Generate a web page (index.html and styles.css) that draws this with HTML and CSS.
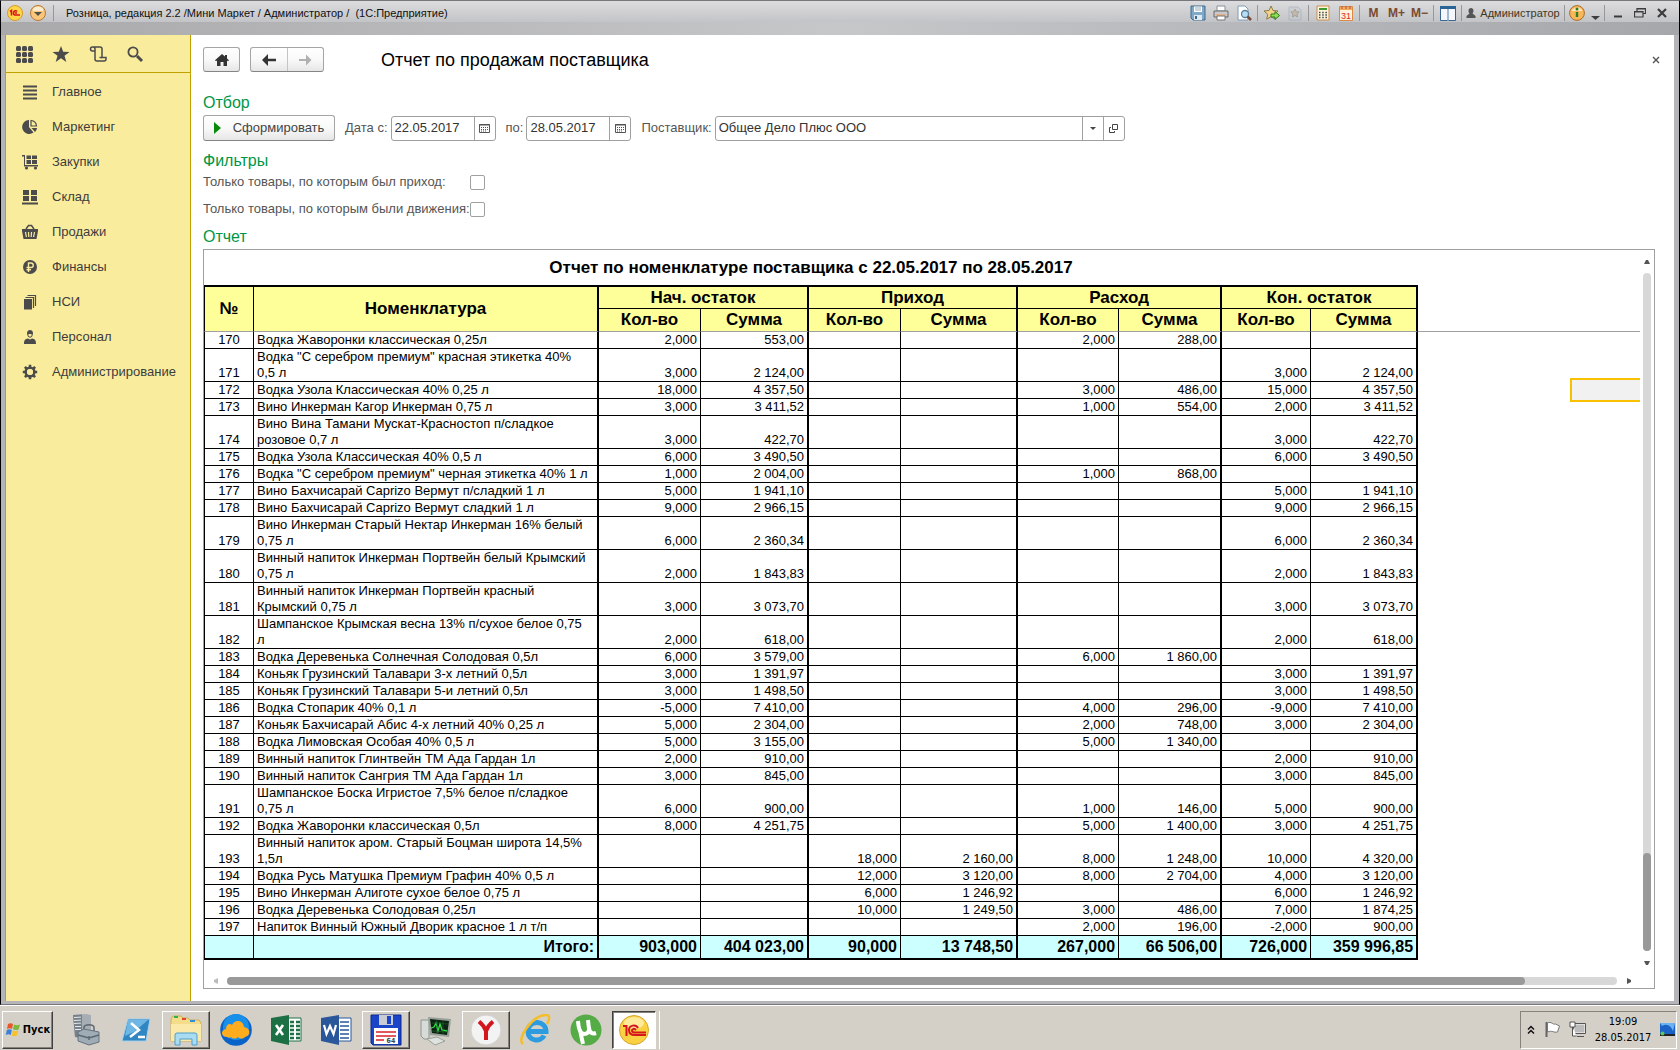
FILE: index.html
```html
<!DOCTYPE html>
<html lang="ru">
<head>
<meta charset="utf-8">
<title>Розница, редакция 2.2</title>
<link rel="stylesheet" href="styles.css">
</head>
<body>
<div class="window">
  <header class="titlebar">
    <button class="logo" aria-label="1С"><svg width="16" height="16" viewBox="0 0 16 16"><circle cx="8" cy="8" r="7.500" fill="#ffd84a" stroke="#d99a2b"/><path d="M3 6.500 4.500 5.500V10.500M10 6.500C9.500 5.500 6.500 5.300 6.500 8S9 10 10 10H13M10 8H8" fill="none" stroke="#d8141c" stroke-width="1.600"/></svg></button>
    <button class="logo" aria-label="Меню"><svg width="16" height="16" viewBox="0 0 16 16"><circle cx="8" cy="8" r="7.500" fill="#fbc67a" stroke="#b5783a"/><path d="M3 3.500a7 7 0 0 1 10 0V6H3z" fill="#fdebd0"/><path d="M4 7h8l-4 4z" fill="#54504a"/></svg></button>
    <span class="sep"></span>
    <h1 class="app-title">Розница, редакция 2.2 /Мини Маркет / Администратор /&nbsp; (1С:Предприятие)</h1>
    <div class="tools">
      <button aria-label="Сохранить"><svg width="16" height="16" viewBox="0 0 16 16"><path d="M1 1h14v14H3l-2-2z" fill="#7fa9c9" stroke="#41698a"/><path d="M4 1.500h8V7H4z" fill="#fff"/><path d="M5 3h6M5 5h6" stroke="#9ab"/><path d="M4 10h8v5H4z" fill="#dfe9f1"/><path d="M5 11h2v3H5z" fill="#41698a"/></svg></button>
      <button aria-label="Печать"><svg width="16" height="16" viewBox="0 0 16 16"><path d="M4 1h8v5H4z" fill="#fff" stroke="#8a8f96"/><path d="M1 6h14v6H1z" fill="#c9c9cc" stroke="#68686c"/><path d="M3 9h10v2H3z" fill="#e2b38a"/><path d="M4 11h8v4H4z" fill="#fff" stroke="#777"/></svg></button>
      <button aria-label="Просмотр"><svg width="16" height="16" viewBox="0 0 16 16"><path d="M2 1h7l3 3v11H2z" fill="#fff" stroke="#7f9cb8"/><circle cx="9" cy="9" r="3.500" fill="#b8def5" stroke="#5b7f9c" stroke-width="1.300"/><path d="m11.500 11.500 3.500 3.500" stroke="#7a4a36" stroke-width="2.500"/></svg></button>
      <span class="sep"></span>
      <button aria-label="В избранное"><svg width="17" height="16" viewBox="0 0 17 16"><path d="m8 1 2 4.500 5 .5-3.700 3.300 1 4.900L8 11.700l-4.300 2.500 1-4.900L1 6l5-.5z" fill="#f3d28a" stroke="#8a7b45"/><path d="M8 9h4V6.500l4.500 4-4.500 4V12H8z" fill="#8fe052" stroke="#2c7a1d"/></svg></button>
      <button aria-label="Избранное"><svg width="14" height="16" viewBox="0 0 14 16" opacity=".5"><path d="M1 2h9l3 3v10H1z" fill="#c4ccd4" stroke="#98a5b2"/><path d="m7 4 1.200 2.700 3 .3-2.200 2 .6 3L7 10.500 4.400 12 5 9 2.800 7l3-.3z" fill="#baa88c" stroke="#85765c"/></svg></button>
      <span class="sep"></span>
      <button aria-label="Калькулятор"><svg width="14" height="16" viewBox="0 0 14 16"><path d="M1 1h12v14H1z" fill="#fdf4dc" stroke="#c98f4f"/><path d="M3 3h8v2H3z" fill="#3f9b2d"/><path d="M3 7.500h8M3 10h8M3 12.500h8" stroke="#444" stroke-width="1.400" stroke-dasharray="1.500 1.700"/></svg></button>
      <button aria-label="Календарь"><svg width="14" height="16" viewBox="0 0 14 16"><path d="M.5 1.500h13v14H.5z" fill="#fff3df" stroke="#d98a45"/><path d="M1 2h12v3H1z" fill="#f4ab55"/><path d="M3 1v3M7 1v3M11 1v3" stroke="#a55" /><text x="7" y="13.500" font-size="9" text-anchor="middle" fill="#e02a20">31</text></svg></button>
      <span class="sep"></span>
      <button class="mem">M</button>
      <button class="mem">M+</button>
      <button class="mem">M−</button>
      <span class="sep"></span>
      <button aria-label="Панели"><svg width="16" height="15" viewBox="0 0 16 15"><path d="M.5.500h15v14H.5z" fill="#f4f8fc" stroke="#37658f"/><path d="M0 0h16v3H0z" fill="#2a6496"/><path d="M8 3v12" stroke="#8aa6bf" stroke-width="1.500"/></svg></button>
      <span class="sep"></span>
      <button class="user"><svg width="10" height="10" viewBox="0 0 10 10"><path d="M5 0c3 0 3 4 1.500 5.500L9.500 8v2H.500V8l3-2.500C2 4 2 0 5 0z" fill="#555"/></svg>Администратор</button>
      <span class="sep"></span>
      <button class="info" aria-label="Справка"><svg width="32" height="16" viewBox="0 0 32 16"><circle cx="8" cy="8" r="7.400" fill="#f8b85a" stroke="#a86f2a"/><path d="M2.500 6a6 6 0 0 1 11 0z" fill="#fde6bf"/><path d="M8 7v5" stroke="#2f7d1e" stroke-width="2.400"/><circle cx="8" cy="4" r="1.500" fill="#2f7d1e"/><path d="M22 11h9l-4.500 4z" fill="#3f3f3f"/></svg></button>
      <span class="sep"></span>
      <button class="ctl" aria-label="Свернуть"><svg width="12" height="12" viewBox="0 0 12 12"><path d="M2 9.500h8" stroke="#3c3c3c" stroke-width="2"/></svg></button>
      <button class="ctl" aria-label="Восстановить"><svg width="12" height="12" viewBox="0 0 12 12"><path d="M3 4V1.500h8.500v5H9M.500 4.500H9V10H.500z" fill="none" stroke="#3c3c3c" stroke-width="1.200"/><path d="M3 2h8M1 5h8" stroke="#3c3c3c"/></svg></button>
      <button class="ctl" aria-label="Закрыть"><svg width="12" height="12" viewBox="0 0 12 12"><path d="m2 2 8 8m0-8-8 8" stroke="#3c3c3c" stroke-width="2.200"/></svg></button>
    </div>
  </header>

  <div class="body">
    <nav class="sidebar">
      <div class="side-tools">
        <button aria-label="Разделы"><svg width="18" height="18" viewBox="0 0 18 18" fill="#4b4b4b"><g id="dots"><rect x="1" y="1" width="5" height="5" rx="1.500"/><rect x="7" y="1" width="5" height="5" rx="1.500"/><rect x="13" y="1" width="5" height="5" rx="1.500"/></g><use href="#dots" y="6"/><use href="#dots" y="12"/></svg></button>
        <button aria-label="Избранное"><svg width="18" height="18" viewBox="0 0 18 18"><path d="m9 1 2.200 5.700 6.300.2-5 3.800 1.800 6.200L9 13.300 3.700 16.900l1.800-6.200-5-3.800 6.300-.2z" fill="#4b4b4b"/></svg></button>
        <button aria-label="История"><svg width="18" height="18" viewBox="0 0 18 18" fill="none" stroke="#4b4b4b" stroke-width="1.500"><path d="M6 6H3.500a2 2 0 0 1 0-4h7.500q2 0 2 2v8.500h4v1.500q0 2-2 2H8q-2 0-2-2V4q0-2-2-2"/><path d="M13 12.500h-2.500"/></svg></button>
        <button aria-label="Поиск"><svg width="18" height="18" viewBox="0 0 18 18" fill="none" stroke="#4b4b4b"><circle cx="7" cy="7" r="4.600" stroke-width="1.800"/><path d="m11 11 5 5" stroke-width="3"/></svg></button>
      </div>
      <ul class="menu">
        <li><a href="#"><svg width="16" height="16" viewBox="0 0 16 16"><path d="M1 2.500h14M1 6.500h14M1 10.500h14M1 14.500h14" stroke="#4b4b4b" stroke-width="2"/></svg>Главное</a></li>
        <li><a href="#"><svg width="16" height="16" viewBox="0 0 16 16"><path d="M7 1v7l4.500 5.500A7 7 0 1 1 7 1z" fill="#4b4b4b"/><path d="M9 1.500A6 6 0 0 1 14.500 7H9z" fill="none" stroke="#4b4b4b" stroke-width="1.200"/><path d="M9.500 9H15a6 6 0 0 1-2 4z" fill="#4b4b4b"/></svg>Маркетинг</a></li>
        <li><a href="#"><svg width="16" height="16" viewBox="0 0 16 16" fill="#4b4b4b"><path d="M0 1h3v10h13v1.500H2V2.500H0zM4.500 1.500H9V5H4.500zM10 1.500h5V5h-5zM4.500 6H9v4H4.500zM10 6h5v4h-5z"/><circle cx="4.500" cy="14" r="1.600"/><circle cx="13.500" cy="14" r="1.600"/></svg>Закупки</a></li>
        <li><a href="#"><svg width="16" height="16" viewBox="0 0 16 16" fill="#4b4b4b"><path d="M1 1h6v5H1zM9 1h6v5H9zM1 7h6v5H1zM9 7h6v5H9zM0 13.500h16v2H0z"/></svg>Склад</a></li>
        <li><a href="#"><svg width="16" height="16" viewBox="0 0 16 16"><path d="M0 5h16v2l-1.500 8h-13L0 7z" fill="#4b4b4b"/><path d="m3.500 8 .9 5M6.500 8l.3 5M9.500 8l-.3 5M12.500 8l-.9 5" stroke="#faec9d" stroke-width="1.200"/><path d="M4 5 6.500 1.500h3L12 5" fill="none" stroke="#4b4b4b" stroke-width="1.500"/></svg>Продажи</a></li>
        <li><a href="#"><svg width="16" height="16" viewBox="0 0 16 16"><circle cx="8" cy="8" r="7" fill="#4b4b4b"/><path d="M6.500 13V4H9c3 0 3 4.500 0 4.500H4.500M4.500 10.700H9" fill="none" stroke="#faec9d" stroke-width="1.400"/></svg>Финансы</a></li>
        <li><a href="#"><svg width="16" height="16" viewBox="0 0 16 16"><path d="M2 5h8v10.500H2z" fill="#4b4b4b"/><path d="M3.500 3.500h8V14M5.500 1.500h8V12" fill="none" stroke="#4b4b4b" stroke-width="1.200"/></svg>НСИ</a></li>
        <li><a href="#"><svg width="16" height="16" viewBox="0 0 16 16" fill="#4b4b4b"><path d="M8 1c3.500 0 3.500 4 2 6.500C9 9 7 9 6 7.500 4.500 5 4.500 1 8 1z"/><path d="M2 15c0-4 1-5 4-5.500l2 1 2-1c3 .5 4 1.500 4 5.500z"/><path d="M6.500 5h3v1.500L8 8 6.500 6.500z" fill="#faec9d"/></svg>Персонал</a></li>
        <li><a href="#"><svg width="16" height="16" viewBox="0 0 16 16"><circle cx="8" cy="8" r="4.300" fill="none" stroke="#4b4b4b" stroke-width="2.600"/><path d="M8 .8v3M8 12.200v3M.8 8h3M12.200 8h3M2.900 2.900 5 5M11 11l2.100 2.100M2.900 13.100 5 11M11 5l2.100-2.100" stroke="#4b4b4b" stroke-width="2.600"/><circle cx="8" cy="8" r="3" fill="#faec9d"/></svg>Администрирование</a></li>
      </ul>
    </nav>

    <main class="content">
      <div class="page-head">
        <button class="btn home" aria-label="Начальная страница"><svg width="14" height="12" viewBox="0 0 14 12"><path d="M7 0 0 6.200 1 7.300l1-.8V12h3.500V8h3v4H12V6.500l1 .8 1-1.100-2-1.800V1h-2v1.600z" fill="#333"/></svg></button>
        <div class="history">
          <button aria-label="Назад"><svg width="14" height="12" viewBox="0 0 14 12"><path d="M0 6 6 0v4.700h8v2.600H6V12z" fill="#333"/></svg></button>
          <button aria-label="Вперед" disabled><svg width="14" height="12" viewBox="0 0 14 12"><path d="M13.500 6 8 .5V5H1v2h7v4.500z" fill="#b0b0b0"/></svg></button>
        </div>
        <h2 class="page-title">Отчет по продажам поставщика</h2>
        <button class="close" aria-label="Закрыть"><svg width="8" height="8" viewBox="0 0 8 8"><path d="m1 1 6 6m0-6L1 7" stroke="#555" stroke-width="1.400"/></svg></button>
      </div>

      <h3 class="group">Отбор</h3>
      <div class="form-row">
        <button class="btn run"><svg width="7" height="12" viewBox="0 0 7 12"><path d="M0 0v12l7-6z" fill="#0a8a0a"/></svg>Сформировать</button>
        <label for="from">Дата с:</label>
        <div class="field date"><input id="from" type="text" value="22.05.2017"><button aria-label="Календарь"><svg width="11" height="9" viewBox="0 0 11 9"><path d="M.5.500h10v8H.5z" fill="none" stroke="#555"/><path d="M0 1h11" stroke="#555"/><path d="M2 3.500h7M2 5.500h7M2 7h5" stroke="#555" stroke-dasharray="1 1"/></svg></button></div>
        <label for="to">по:</label>
        <div class="field date"><input id="to" type="text" value="28.05.2017"><button aria-label="Календарь"><svg width="11" height="9" viewBox="0 0 11 9"><path d="M.5.500h10v8H.5z" fill="none" stroke="#555"/><path d="M0 1h11" stroke="#555"/><path d="M2 3.500h7M2 5.500h7M2 7h5" stroke="#555" stroke-dasharray="1 1"/></svg></button></div>
        <label for="vendor">Поставщик:</label>
        <div class="field vendor"><input id="vendor" type="text" value="Общее Дело Плюс ООО"><button aria-label="Выбрать"><svg width="6" height="3" viewBox="0 0 6 3"><path d="M0 0h6L3 3z" fill="#444"/></svg></button><button aria-label="Открыть"><svg width="9" height="9" viewBox="0 0 9 9"><path d="M3.500.500h5v5h-5zM2 3.500H.500v5h5V7" fill="none" stroke="#444"/></svg></button></div>
      </div>

      <h3 class="group filters">Фильтры</h3>
      <div class="check"><label for="income">Только товары, по которым был приход:</label><input id="income" type="checkbox"></div>
      <div class="check"><label for="moves">Только товары, по которым были движения:</label><input id="moves" type="checkbox"></div>

      <h3 class="group report-label">Отчет</h3>
      <section class="report">
        <div class="sheet">
          <table>
            <caption>Отчет по номенклатуре поставщика с 22.05.2017 по 28.05.2017</caption>
            <colgroup><col class="c-num"><col class="c-name"><col class="c-q1"><col class="c-s1"><col class="c-q2"><col class="c-s2"><col class="c-q3"><col class="c-s3"><col class="c-q4"><col class="c-s4"></colgroup>
            <thead>
              <tr><th rowspan="2" class="low first">№</th><th rowspan="2" class="low thick">Номенклатура</th><th colspan="2" class="thick">Нач. остаток</th><th colspan="2" class="thick">Приход</th><th colspan="2" class="thick">Расход</th><th colspan="2" class="thick">Кон. остаток</th></tr>
              <tr><th class="low">Кол-во</th><th class="low thick">Сумма</th><th class="low">Кол-во</th><th class="low thick">Сумма</th><th class="low">Кол-во</th><th class="low thick">Сумма</th><th class="low">Кол-во</th><th class="low thick">Сумма</th></tr>
            </thead>
            <tbody>
              <tr><td>170</td><td>Водка Жаворонки классическая 0,25л</td><td>2,000</td><td>553,00</td><td></td><td></td><td>2,000</td><td>288,00</td><td></td><td></td></tr>
              <tr><td>171</td><td>Водка "С серебром премиум" красная этикетка 40% <br>0,5 л</td><td>3,000</td><td>2 124,00</td><td></td><td></td><td></td><td></td><td>3,000</td><td>2 124,00</td></tr>
              <tr><td>172</td><td>Водка Узола Классическая 40% 0,25 л</td><td>18,000</td><td>4 357,50</td><td></td><td></td><td>3,000</td><td>486,00</td><td>15,000</td><td>4 357,50</td></tr>
              <tr><td>173</td><td>Вино Инкерман Кагор Инкерман 0,75 л</td><td>3,000</td><td>3 411,52</td><td></td><td></td><td>1,000</td><td>554,00</td><td>2,000</td><td>3 411,52</td></tr>
              <tr><td>174</td><td>Вино Вина Тамани Мускат-Красностоп п/сладкое <br>розовое 0,7 л</td><td>3,000</td><td>422,70</td><td></td><td></td><td></td><td></td><td>3,000</td><td>422,70</td></tr>
              <tr><td>175</td><td>Водка Узола Классическая 40% 0,5 л</td><td>6,000</td><td>3 490,50</td><td></td><td></td><td></td><td></td><td>6,000</td><td>3 490,50</td></tr>
              <tr><td>176</td><td>Водка "С серебром премиум" черная этикетка 40% 1 л</td><td>1,000</td><td>2 004,00</td><td></td><td></td><td>1,000</td><td>868,00</td><td></td><td></td></tr>
              <tr><td>177</td><td>Вино Бахчисарай Caprizo Вермут п/сладкий 1 л</td><td>5,000</td><td>1 941,10</td><td></td><td></td><td></td><td></td><td>5,000</td><td>1 941,10</td></tr>
              <tr><td>178</td><td>Вино Бахчисарай Caprizo Вермут сладкий 1 л</td><td>9,000</td><td>2 966,15</td><td></td><td></td><td></td><td></td><td>9,000</td><td>2 966,15</td></tr>
              <tr><td>179</td><td>Вино Инкерман Старый Нектар Инкерман 16% белый <br>0,75 л</td><td>6,000</td><td>2 360,34</td><td></td><td></td><td></td><td></td><td>6,000</td><td>2 360,34</td></tr>
              <tr><td>180</td><td>Винный напиток Инкерман Портвейн белый Крымский <br>0,75 л</td><td>2,000</td><td>1 843,83</td><td></td><td></td><td></td><td></td><td>2,000</td><td>1 843,83</td></tr>
              <tr><td>181</td><td>Винный напиток Инкерман Портвейн красный <br>Крымский 0,75 л</td><td>3,000</td><td>3 073,70</td><td></td><td></td><td></td><td></td><td>3,000</td><td>3 073,70</td></tr>
              <tr><td>182</td><td>Шампанское Крымская весна 13% п/сухое белое 0,75 <br>л</td><td>2,000</td><td>618,00</td><td></td><td></td><td></td><td></td><td>2,000</td><td>618,00</td></tr>
              <tr><td>183</td><td>Водка Деревенька Солнечная Солодовая 0,5л</td><td>6,000</td><td>3 579,00</td><td></td><td></td><td>6,000</td><td>1 860,00</td><td></td><td></td></tr>
              <tr><td>184</td><td>Коньяк Грузинский Талавари 3-х летний 0,5л</td><td>3,000</td><td>1 391,97</td><td></td><td></td><td></td><td></td><td>3,000</td><td>1 391,97</td></tr>
              <tr><td>185</td><td>Коньяк Грузинский Талавари 5-и летний 0,5л</td><td>3,000</td><td>1 498,50</td><td></td><td></td><td></td><td></td><td>3,000</td><td>1 498,50</td></tr>
              <tr><td>186</td><td>Водка Стопарик 40% 0,1 л</td><td>-5,000</td><td>7 410,00</td><td></td><td></td><td>4,000</td><td>296,00</td><td>-9,000</td><td>7 410,00</td></tr>
              <tr><td>187</td><td>Коньяк Бахчисарай Абис 4-х летний 40% 0,25 л</td><td>5,000</td><td>2 304,00</td><td></td><td></td><td>2,000</td><td>748,00</td><td>3,000</td><td>2 304,00</td></tr>
              <tr><td>188</td><td>Водка Лимовская Особая 40% 0,5 л</td><td>5,000</td><td>3 155,00</td><td></td><td></td><td>5,000</td><td>1 340,00</td><td></td><td></td></tr>
              <tr><td>189</td><td>Винный напиток Глинтвейн ТМ Ада Гардан 1л</td><td>2,000</td><td>910,00</td><td></td><td></td><td></td><td></td><td>2,000</td><td>910,00</td></tr>
              <tr><td>190</td><td>Винный напиток Сангрия ТМ Ада Гардан 1л</td><td>3,000</td><td>845,00</td><td></td><td></td><td></td><td></td><td>3,000</td><td>845,00</td></tr>
              <tr><td>191</td><td>Шампанское Боска Игристое 7,5% белое п/сладкое <br>0,75 л</td><td>6,000</td><td>900,00</td><td></td><td></td><td>1,000</td><td>146,00</td><td>5,000</td><td>900,00</td></tr>
              <tr><td>192</td><td>Водка Жаворонки классическая 0,5л</td><td>8,000</td><td>4 251,75</td><td></td><td></td><td>5,000</td><td>1 400,00</td><td>3,000</td><td>4 251,75</td></tr>
              <tr><td>193</td><td>Винный напиток аром. Старый Боцман широта 14,5% <br>1,5л</td><td></td><td></td><td>18,000</td><td>2 160,00</td><td>8,000</td><td>1 248,00</td><td>10,000</td><td>4 320,00</td></tr>
              <tr><td>194</td><td>Водка Русь Матушка Премиум Графин 40% 0,5 л</td><td></td><td></td><td>12,000</td><td>3 120,00</td><td>8,000</td><td>2 704,00</td><td>4,000</td><td>3 120,00</td></tr>
              <tr><td>195</td><td>Вино Инкерман Алиготе сухое белое 0,75 л</td><td></td><td></td><td>6,000</td><td>1 246,92</td><td></td><td></td><td>6,000</td><td>1 246,92</td></tr>
              <tr><td>196</td><td>Водка Деревенька Солодовая 0,25л</td><td></td><td></td><td>10,000</td><td>1 249,50</td><td>3,000</td><td>486,00</td><td>7,000</td><td>1 874,25</td></tr>
              <tr><td>197</td><td>Напиток Винный Южный Дворик красное 1 л т/п</td><td></td><td></td><td></td><td></td><td>2,000</td><td>196,00</td><td>-2,000</td><td>900,00</td></tr>
            </tbody>
            <tfoot>
              <tr><td></td><td>Итого:</td><td>903,000</td><td>404 023,00</td><td>90,000</td><td>13 748,50</td><td>267,000</td><td>66 506,00</td><td>726,000</td><td>359 996,85</td></tr>
            </tfoot>
          </table>
          <div class="freeze"></div>
          <div class="cursor"></div>
        </div>
        <div class="vbar"><button aria-label="Вверх"><svg width="6" height="4" viewBox="0 0 6 4"><path d="M0 4h6L4 0H2z" fill="#555"/></svg></button><div class="track"><div class="thumb"></div></div><button aria-label="Вниз"><svg width="6" height="4" viewBox="0 0 6 4"><path d="M0 0h6L4 4H2z" fill="#555"/></svg></button></div>
        <div class="hbar"><button aria-label="Влево"><svg width="4" height="6" viewBox="0 0 4 6"><path d="M4 0v6L0 4V2z" fill="#bbb"/></svg></button><div class="track"><div class="thumb"></div></div><button aria-label="Вправо"><svg width="4" height="6" viewBox="0 0 4 6"><path d="M0 0v6l4-2V2z" fill="#555"/></svg></button></div>
      </section>
    </main>
  </div>
</div>

<footer class="taskbar">
  <button class="start"><svg width="17" height="16" viewBox="0 0 17 16"><path d="M3 2c2-1.200 3.500-1 5 0L7 7C5.500 6 4 6 2 7z" fill="#e8562a"/><path d="M9 2.500c2 1 4 .8 6 0l-1.500 5C12 8.300 10 8 8 7.500z" fill="#7cb83a"/><path d="M1.800 8c2-1 3.500-1 5 0l-1 5c-1.500-1-3-1-5 0z" fill="#3a7fd8"/><path d="M7.800 8.500c2 .8 3.500 1 5.500 0l-1.500 5c-1.800 1-3.500.8-5 0z" fill="#f6c12c"/></svg>Пуск</button>
  <div class="apps">
    <button aria-label="Диспетчер сервера"><svg width="32" height="32" viewBox="0 0 32 32"><path d="M3 1 16 0l5 1v22l-5 2L5 23z" fill="#a6adb3"/><path d="m3 1 9-.5V24l-7-1z" fill="#77818a"/><path d="m4 3.500 7-.4M4 6.500l7-.4M4 9.500l7-.4M5 12.500h6M5 15.500h6" stroke="#e4e8eb"/><path d="m8 18 6-3 15 3v10l-10 3-11-4z" fill="#9fabb5" stroke="#65727d"/><path d="M14 15v-2c1-3 9-3 10 0v4M8 21l11 3 10-3M19 22v4" stroke="#5c6873" stroke-width="1.500" fill="none"/></svg></button>
    <button aria-label="PowerShell"><svg width="32" height="32" viewBox="0 0 32 32"><path d="M8 5h22l-4 22H2z" fill="#2f86c2" stroke="#a5d1ec"/><path d="M8 6h20L14 18 5 22z" fill="#6eb6e3"/><path d="m11 9 8 7-9 7M18 23h7" fill="none" stroke="#fff" stroke-width="2.500"/></svg></button>
    <button class="raised" aria-label="Проводник"><svg width="32" height="32" viewBox="0 0 32 32"><path d="M1 5 3 2h8l2 2h5l2 2h9l2 3v18H1z" fill="#f5dc8a" stroke="#d0ae56"/><path d="M1 10h30v17H1z" fill="#fae9a8"/><path d="M4 2h4v2H4z" fill="#2fb34a"/><path d="M12 4h4v2h-4z" fill="#e2442f"/><path d="M20 6h5v2h-5z" fill="#2f8fd8"/><path d="M5 31V21q0-2 2-2h18q2 0 2 2v10h-5v-6H10v6z" fill="#a9dcf3" stroke="#4f9fcb"/></svg></button>
    <button aria-label="Облако"><svg width="32" height="32" viewBox="0 0 32 32"><circle cx="16" cy="16" r="15.800" fill="#0a63c8"/><circle cx="16" cy="13" r="13" fill="#188fe8"/><path d="M7 23c-6 0-7-7-1-8 0-5 4-6 6-4 3-6 11-5 12 2 7 1 7 9 1 10-2 2-5 2-7 0-2 2-6 2-7 0-1 1-3 1-4 0z" fill="#ffad1f"/></svg></button>
    <button aria-label="Excel"><svg width="32" height="32" viewBox="0 0 32 32"><path d="M16 4h15v23H16z" fill="#fff" stroke="#1d7044"/><path d="M20 8h4M26 8h4M20 12h4M26 12h4M20 16h4M26 16h4M20 20h4M26 20h4M20 24h4M26 24h4" stroke="#1d7044" stroke-width="2.500"/><path d="M1 4 19 1v30L1 27z" fill="#1d7044"/><path d="m6 11 7 10m0-10L6 21" stroke="#fff" stroke-width="2.600"/></svg></button>
    <button aria-label="Word"><svg width="32" height="32" viewBox="0 0 32 32"><path d="M16 4h15v23H16z" fill="#fff" stroke="#2a579a"/><path d="M20 8h9M20 12h9M20 16h9M20 20h9M20 24h9" stroke="#2a579a" stroke-width="1.600"/><path d="M1 4 19 1v30L1 27z" fill="#2a579a"/><path d="m4 11 2.500 9L10 12l3.500 8L16 11" stroke="#fff" stroke-width="2.200" fill="none"/></svg></button>
    <button class="raised" aria-label="Total Commander"><svg width="32" height="32" viewBox="0 0 32 32"><path d="M1 1h30v30H3l-2-2z" fill="#1b45c8" stroke="#0d2a8c"/><path d="M9 1h14v10H9z" fill="#c8ccd4"/><path d="M17 2h4v8h-4z" fill="#1b45c8"/><path d="M4 14h24v16H4z" fill="#fff"/><path d="M6 18h20M6 22h20M6 26h8" stroke="#d8232a" stroke-width="1.300"/><text x="21" y="29" font-size="7" font-weight="bold" text-anchor="middle" fill="#444">64</text></svg></button>
    <button aria-label="Монитор"><svg width="32" height="32" viewBox="0 0 32 32"><path d="M1 6h8v19H4l-3-3z" fill="#d8dcd8" stroke="#8c948e"/><path d="m8 3 23 2-2 18-19-2z" fill="#98a098"/><path d="m10 5 19 2-2 14-15-2z" fill="#0c2212"/><path d="m11 14 3-1 2-4 2 8 2-7 2 6 5 1" stroke="#35e04a" fill="none" stroke-width="1.300"/><path d="m12 9 16 1M12 17l15 1M17 6v13M23 7v13" stroke="#1d6b30" stroke-width=".6"/><path d="m7 25 10-2 8 4-10 4z" fill="#dfe3df" stroke="#98a098"/></svg></button>
    <button class="raised" aria-label="Яндекс"><svg width="32" height="32" viewBox="0 0 32 32"><circle cx="16" cy="16" r="15" fill="#f3f3f3" stroke="#d2d2d2"/><path d="M9 7.500q5 4 7 9.500 2-5.500 7-9.500M16 16v10" stroke="#d3161e" stroke-width="4" fill="none"/></svg></button>
    <button aria-label="Internet Explorer"><svg width="32" height="32" viewBox="0 0 32 32"><path d="M8 17.500h18c0-12-18-12-18 0 0 10 13 11 16 4" fill="none" stroke="#2d9be0" stroke-width="5"/><path d="M3 30C-4 26 12 1 26 1c4 0 4 4 1 9" fill="none" stroke="#f5bd29" stroke-width="2.500"/></svg></button>
    <button aria-label="µTorrent"><svg width="32" height="32" viewBox="0 0 32 32"><circle cx="16" cy="16" r="15.500" fill="#55ab45"/><path d="M8 7q1 13 6 13t5-5l-1-9M19 14q1 7 7 5M10 16l3 14" fill="none" stroke="#fff" stroke-width="4"/></svg></button>
    <button class="raised current" aria-label="1С"><svg width="32" height="32" viewBox="0 0 32 32"><circle cx="16" cy="16" r="14.500" fill="#fbd144" stroke="#d6a52e"/><ellipse cx="16" cy="9" rx="10" ry="6" fill="#fdea9a"/><path d="M5 12h3.500v10M20 14c-2-4-9-3-9 2 0 4 3 5 6 5h11M18 16c-2-2-4-1-4 .5s1 2 3 2h11" fill="none" stroke="#d6161c" stroke-width="2"/></svg></button>
  </div>
  <div class="tray">
    <svg width="8" height="10" viewBox="0 0 8 10"><path d="m1 4.500 3-3 3 3M1 8.500l3-3 3 3" fill="none" stroke="#111" stroke-width="1.500"/></svg>
    <svg width="17" height="17" viewBox="0 0 17 17"><path d="M2.500 1v15" stroke="#666" stroke-width="2"/><path d="M3.500 2c4-2 5 2 8 1l4 2-2 6c-4 1-5-2-10 0z" fill="#fff" stroke="#777"/></svg>
    <svg width="17" height="17" viewBox="0 0 17 17"><path d="M5 3h11v9H5z" fill="#bbb" stroke="#fff"/><path d="M4.500 2.500h12v10h-12zM8 15.500h7" fill="none" stroke="#555"/><path d="M1 1h5v5H1zM3.500 6v9h4" fill="#fff" stroke="#555"/></svg>
    <div class="clock"><time>19:09</time><time>28.05.2017</time></div>
    <svg width="15" height="13" viewBox="0 0 15 13"><path d="M0 0h15v13H0z" fill="#1b62c6"/><path d="M2 3q7-4 11 5l2-8H0z" fill="#6cb2f0"/><path d="M0 11h15v2H0z" fill="#222"/><circle cx="2.500" cy="10.500" r="2" fill="#5fc25a"/></svg>
  </div>
</footer>
</body>
</html>
```

FILE: styles.css
```css
* { box-sizing: border-box; }
body {
  margin: 0;
  min-height: 100vh;
  display: flex;
  flex-direction: column;
  font: 13px/16px "Liberation Sans", Arial, sans-serif;
  color: #333;
  background: #d4d0c8;
}
button {
  margin: 0;
  padding: 0;
  border: 0;
  background: none;
  font: inherit;
  color: inherit;
  display: flex;
  align-items: center;
  justify-content: center;
}
svg { display: block; flex: none; }
h1, h2, h3 { margin: 0; font-weight: normal; }

/* application window */
.window {
  flex: 1;
  display: flex;
  flex-direction: column;
  padding: 0 5px 3px 4px;
  background: #b5b5b9;
  border: 1px solid #77777b;
  border-left-color: #000;
  border-right-color: #000;
}
.titlebar {
  height: 34px;
  margin: 0 -5px 0 -4px;
  padding: 2px 6px 12px 6px;
  display: flex;
  align-items: center;
  background: linear-gradient(#dcdcde 0, #c3c4c7 21px, transparent 21px),
    linear-gradient(90deg, #a9a9ac 0, #c6c7c9 50%, #a6a7ab 100%);
}
.logo { width: 24px; height: 20px; }
.sep { width: 1px; height: 16px; background: #97979b; }
.logo:first-child { width: 16px; }
.logo + .logo { width: 30px; }
.app-title {
  flex: 1;
  margin-left: 12px;
  font-size: 11px;
  color: #111;
  white-space: nowrap;
}
.tools { display: flex; align-items: center; color: #5a3d1c; }
.tools .sep { margin: 0 2px; }
.tools button { width: 23px; height: 20px; }
.tools .mem {
  font-weight: bold;
  font-size: 12px;
  color: #7a4a2e;
}
.tools .user { width: 98px; gap: 4px; font-size: 11px; color: #43371c; }
.tools .info { width: 35px; }
.tools .ctl { width: 22px; }

.body { flex: 1; display: flex; border-left: 1px solid #99999d; background: #fff; }

/* section panel */
.sidebar {
  width: 185px;
  flex: none;
  background: #faec9d;
  border-right: 1px solid #c0a100;
}
.side-tools {
  height: 38px;
  padding: 0 0 0 9px;
  display: flex;
  align-items: center;
  gap: 19px;
  border-bottom: 1px solid #c0a100;
}
.menu { list-style: none; margin: 0; padding: 0; }
.menu a {
  height: 35px;
  padding: 2px 0 0 16px;
  display: flex;
  align-items: center;
  gap: 14px;
  color: #3d3d3d;
  text-decoration: none;
}

/* form */
.content {
  flex: 1;
  min-width: 0;
  display: flex;
  flex-direction: column;
  padding: 12px 19px 12px 12px;
}
.page-head { display: flex; align-items: center; height: 25px; }
.btn, .history {
  border: 1px solid #a5a5a5;
  border-bottom-color: #858585;
  border-radius: 3px;
  background: linear-gradient(#fff, #f9f9f9 50%, #e6e6e6);
}
.home { width: 37px; height: 25px; }
.history { display: flex; width: 74px; height: 25px; margin-left: 10px; }
.history button { flex: 1; }
.history button + button { border-left: 1px solid #c4c4c4; }
.page-title { flex: 1; margin-left: 57px; font-size: 18px; line-height: 26px; color: #000; }
.close { width: 18px; height: 18px; margin-right: -10px; }
.group { margin-top: 20px; font-size: 16px; line-height: 22px; color: #009646; }
.filters { margin-top: 9px; }
.report-label { margin-top: 7px; }
.form-row {
  display: flex;
  align-items: center;
  height: 26px;
  margin-top: 1px;
  color: #555;
}
.form-row label { margin-left: 10px; margin-right: 3px; }
.run { width: 132px; height: 26px; gap: 12px; color: #444; }
.field {
  display: flex;
  height: 25px;
  border: 1px solid #a0a0a0;
  border-radius: 3px;
  background: #fff;
}
.field input {
  flex: 1;
  min-width: 0;
  margin: 0;
  padding: 0 3px;
  border: 0;
  background: none;
  font: inherit;
  color: #333;
  outline: none;
}
.field button { width: 21px; border-left: 1px solid #a0a0a0; }
.date { width: 105px; }
.vendor { width: 410px; }
.check {
  display: flex;
  align-items: center;
  height: 20px;
  color: #555;
}
.check label { width: 267px; white-space: nowrap; }
.check input {
  appearance: none;
  width: 15px;
  height: 15px;
  margin: 0;
  border: 1px solid #a0a0a0;
  border-radius: 2px;
}
.check + .check { margin-top: 7px; }

/* report */
.report {
  flex: 1;
  margin-top: 1px;
  display: grid;
  grid-template-columns: minmax(0, 1fr) 14px;
  grid-template-rows: 1fr 14px;
  border: 1px solid #a0a0a0;
}
.sheet { position: relative; overflow: hidden; }
table {
  width: 1214px;
  table-layout: fixed;
  border-collapse: separate;
  border-spacing: 0;
  color: #000;
}
caption {
  height: 35px;
  font-weight: bold;
  font-size: 17px;
  line-height: 35px;
}
.c-num { width: 50px; }
.c-name { width: 345px; }
.c-q1 { width: 102px; }
.c-s1 { width: 108px; }
.c-q2 { width: 92px; }
.c-s2 { width: 117px; }
.c-q3 { width: 101px; }
.c-s3 { width: 103px; }
.c-q4 { width: 89px; }
.c-s4 { width: 107px; }
th {
  height: 23px;
  padding: 0;
  font-size: 17px;
  line-height: 20px;
  background: #ffff99;
  border-right: 1px solid #000;
  border-bottom: 1px solid #000;
}
thead tr:first-child th { height: 24px; border-top: 2px solid #000; }
thead .low { border-bottom-color: #a0a0a0; }
thead .thick { border-right-width: 2px; }
thead .first { border-left: 1px solid #000; }
td {
  padding: 0 3px;
  text-align: right;
  vertical-align: bottom;
  white-space: nowrap;
  border-right: 1px solid #000;
  border-bottom: 1px solid #000;
}
tbody td { height: 17px; }
td:nth-child(2n) { border-right-width: 2px; }
td:first-child { text-align: center; border-left: 1px solid #000; }
tbody td:nth-child(2) { text-align: left; }
tfoot td {
  height: 24px;
  font-size: 16px;
  line-height: 22px;
  vertical-align: middle;
  font-weight: bold;
  background: #ccffff;
  border-bottom-width: 2px;
}
.freeze {
  position: absolute;
  left: 1214px;
  right: 0;
  top: 81px;
  border-top: 1px solid #a0a0a0;
}
.cursor {
  position: absolute;
  right: 0;
  top: 128px;
  width: 70px;
  height: 24px;
  border: 2px solid #f9c000;
  border-right: 0;
  background: #f1f1f1;
}
.vbar { display: flex; flex-direction: column; align-items: center; }
.hbar { display: flex; align-items: center; }
.vbar button { width: 14px; height: 23px; }
.hbar button { width: 23px; height: 14px; }
.track { flex: 1; display: flex; border-radius: 4px; background: #d8d8d8; }
.thumb { border-radius: 4px; background: #999; }
.vbar .track { width: 8px; align-items: flex-end; }
.vbar .thumb { width: 8px; height: 14.5%; }
.hbar .track { height: 8px; }
.hbar .thumb { width: 93.4%; }

/* taskbar */
.taskbar {
  height: 45px;
  display: flex;
  align-items: center;
  padding: 3px 3px 0 2px;
  border-top: 1px solid #fff;
  font-family: "DejaVu Sans Condensed", "DejaVu Sans", sans-serif;
  color: #000;
}
.start, .raised {
  border: 1px solid;
  border-color: #fff #404040 #404040 #fff;
  box-shadow: inset -1px -1px #85827c;
}
.start { width: 51px; height: 38px; gap: 1px; font-weight: bold; font-size: 11px; }
.apps { flex: 1; display: flex; align-items: center; gap: 2px; margin-left: 9px; }
.apps button { width: 48px; height: 38px; }
.apps .current {
  width: 44px;
  background: #fff;
  border-color: #404040 #fff #fff #404040;
  box-shadow: inset 1px 1px #85827c, 3px 0 #d4d0c8, 4px 0 #fff;
}
.tray {
  height: 38px;
  width: 157px;
  padding: 0 1px 0 6px;
  display: flex;
  align-items: center;
  justify-content: space-between;
  border: 1px solid;
  border-color: #85827c #fff #fff #85827c;
}
.clock { display: flex; flex-direction: column; align-items: center; font-size: 11px; }
```
